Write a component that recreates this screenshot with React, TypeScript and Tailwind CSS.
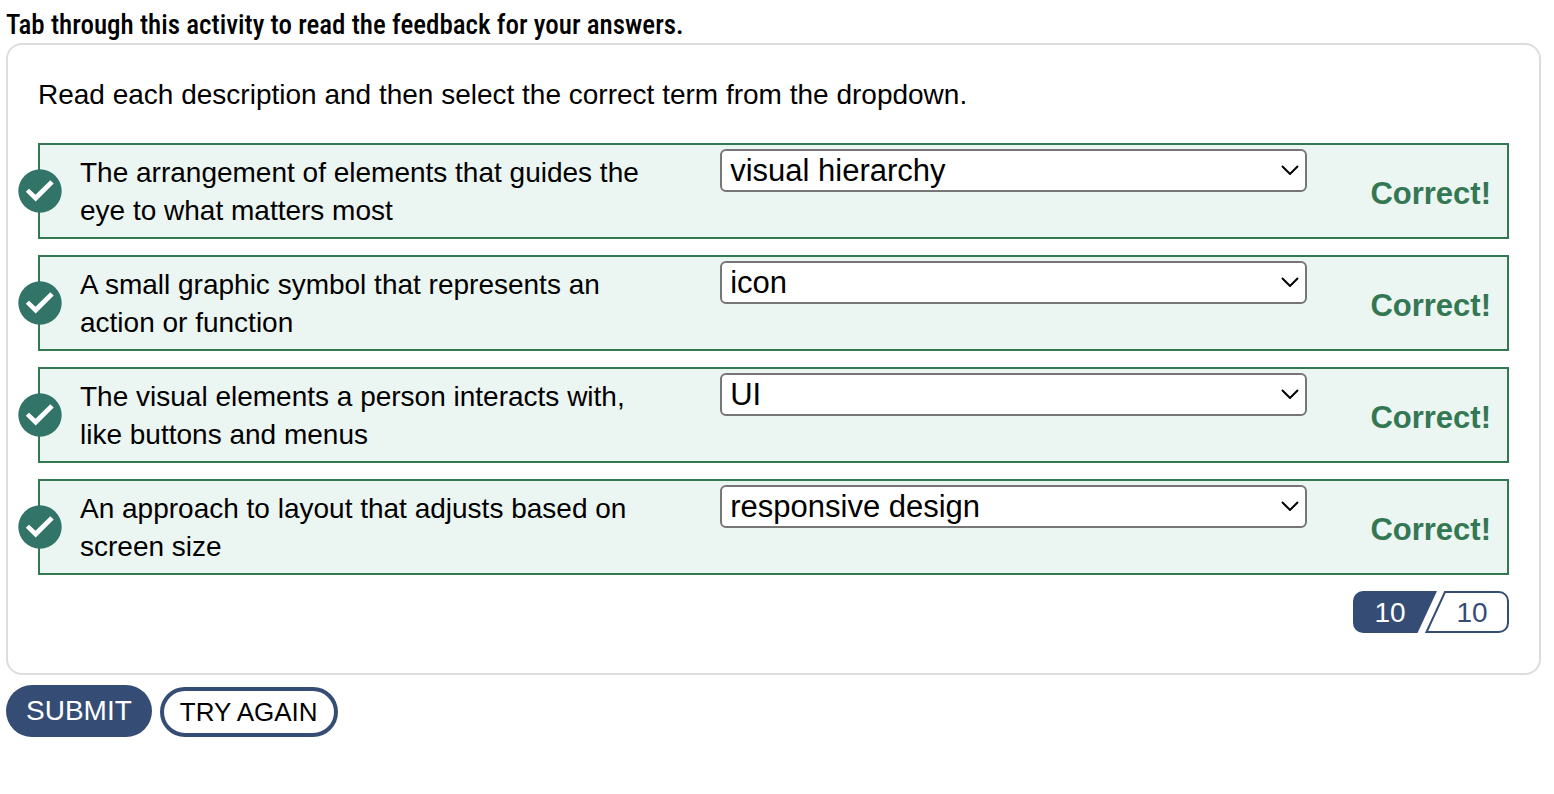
import { useState } from 'react';

const terms = ['visual hierarchy', 'icon', 'UI', 'responsive design'];

const questions = [
  {
    id: 'hierarchy',
    description: 'The arrangement of elements that guides the eye to what matters most',
    answer: 'visual hierarchy',
  },
  {
    id: 'icon',
    description: 'A small graphic symbol that represents an action or function',
    answer: 'icon',
  },
  {
    id: 'ui',
    description: 'The visual elements a person interacts with, like buttons and menus',
    answer: 'UI',
  },
  {
    id: 'responsive',
    description: 'An approach to layout that adjusts based on screen size',
    answer: 'responsive design',
  },
];

function CheckBadge() {
  return (
    <svg
      viewBox="0 0 44 44"
      className="absolute top-1/2 left-0 h-11 w-11 -translate-x-1/2 -translate-y-1/2"
      aria-hidden="true"
    >
      <circle cx="22" cy="22" r="21.7" fill="#327568" />
      <path d="M7.800 22.800 11 19.700 17.500 25.800 32.300 11.200 35.700 14.600 17.700 32.500Z" fill="#fff" />
    </svg>
  );
}

function Score() {
  return (
    <div className="relative grid h-[42px] w-[156px] grid-cols-2 items-center text-center text-[28px] leading-[42px]">
      <svg viewBox="0 0 156 42" className="absolute inset-0 h-full w-full" aria-hidden="true">
        <path d="M10 0H84L64.500 42H10A10 10 0 0 1 0 32V10A10 10 0 0 1 10 0Z" fill="#354d75" />
        <path
          d="M92 1H146A9 9 0 0 1 155 10V32A9 9 0 0 1 146 41H73.500Z"
          fill="#fff"
          stroke="#354d75"
          strokeWidth="2"
        />
      </svg>
      <span className="relative pt-px pr-1 text-white">10</span>
      <span className="relative pt-px pl-1 text-[#354d75]">10</span>
    </div>
  );
}

export default function App() {
  const [answers, setAnswers] = useState(questions.map((q) => q.answer));

  const handleChange = (index: number, value: string) => {
    setAnswers(answers.map((a, i) => (i === index ? value : a)));
  };

  return (
    <main className="bg-white pt-[7px] pr-[13px] pl-[6px] font-['Liberation_Sans',Arial,sans-serif] text-[28px] leading-[38px] text-black">
      <p className="font-['Roboto_Condensed','Liberation_Sans_Narrow',Roboto,sans-serif] text-[27px] leading-9 font-medium">
        Tab through this activity to read the feedback for your answers.
      </p>

      <section className="rounded-2xl border-2 border-[#dddddd] px-[30px] pt-[31px] pb-10">
        <p className="mb-[29px]">
          Read each description and then select the correct term from the dropdown.
        </p>

        <div className="flex flex-col gap-4">
          {questions.map((question, index) => (
            <div
              key={question.id}
              className="relative flex items-start border-2 border-[#347853] bg-[#ebf5f2]"
            >
              <CheckBadge />
              <label htmlFor={question.id} className="flex-1 pt-[9px] pr-16 pb-[7px] pl-10">
                {question.description}
              </label>
              <div className="relative mt-1 w-2/5">
                <select
                  id={question.id}
                  value={answers[index]}
                  onChange={(e) => handleChange(index, e.target.value)}
                  className="block h-[43px] w-full appearance-none rounded-md border-2 border-[#767676] bg-white px-2 text-[31px] leading-[38px]"
                >
                  {terms.map((term) => (
                    <option key={term}>{term}</option>
                  ))}
                </select>
                <svg
                  viewBox="0 0 18 10"
                  className="pointer-events-none absolute top-4 right-2 h-[10px] w-[18px]"
                  aria-hidden="true"
                >
                  <path d="M1 1 9 9 17 1" fill="none" stroke="#000" strokeWidth="2" />
                </svg>
              </div>
              <strong className="w-[200px] self-center pt-[6px] pr-4 text-right text-[31px] text-[#347853]">
                Correct!
              </strong>
            </div>
          ))}
        </div>

        <div className="mt-4 flex justify-end">
          <Score />
        </div>
      </section>

      <div className="mt-[10px] flex items-end gap-2">
        <button type="button" className="h-[52px] rounded-full bg-[#354d75] px-5 text-white">
          SUBMIT
        </button>
        <button
          type="button"
          className="h-[50px] rounded-full border-4 border-[#354d75] bg-white px-4 text-[26px]"
        >
          TRY AGAIN
        </button>
      </div>
    </main>
  );
}
